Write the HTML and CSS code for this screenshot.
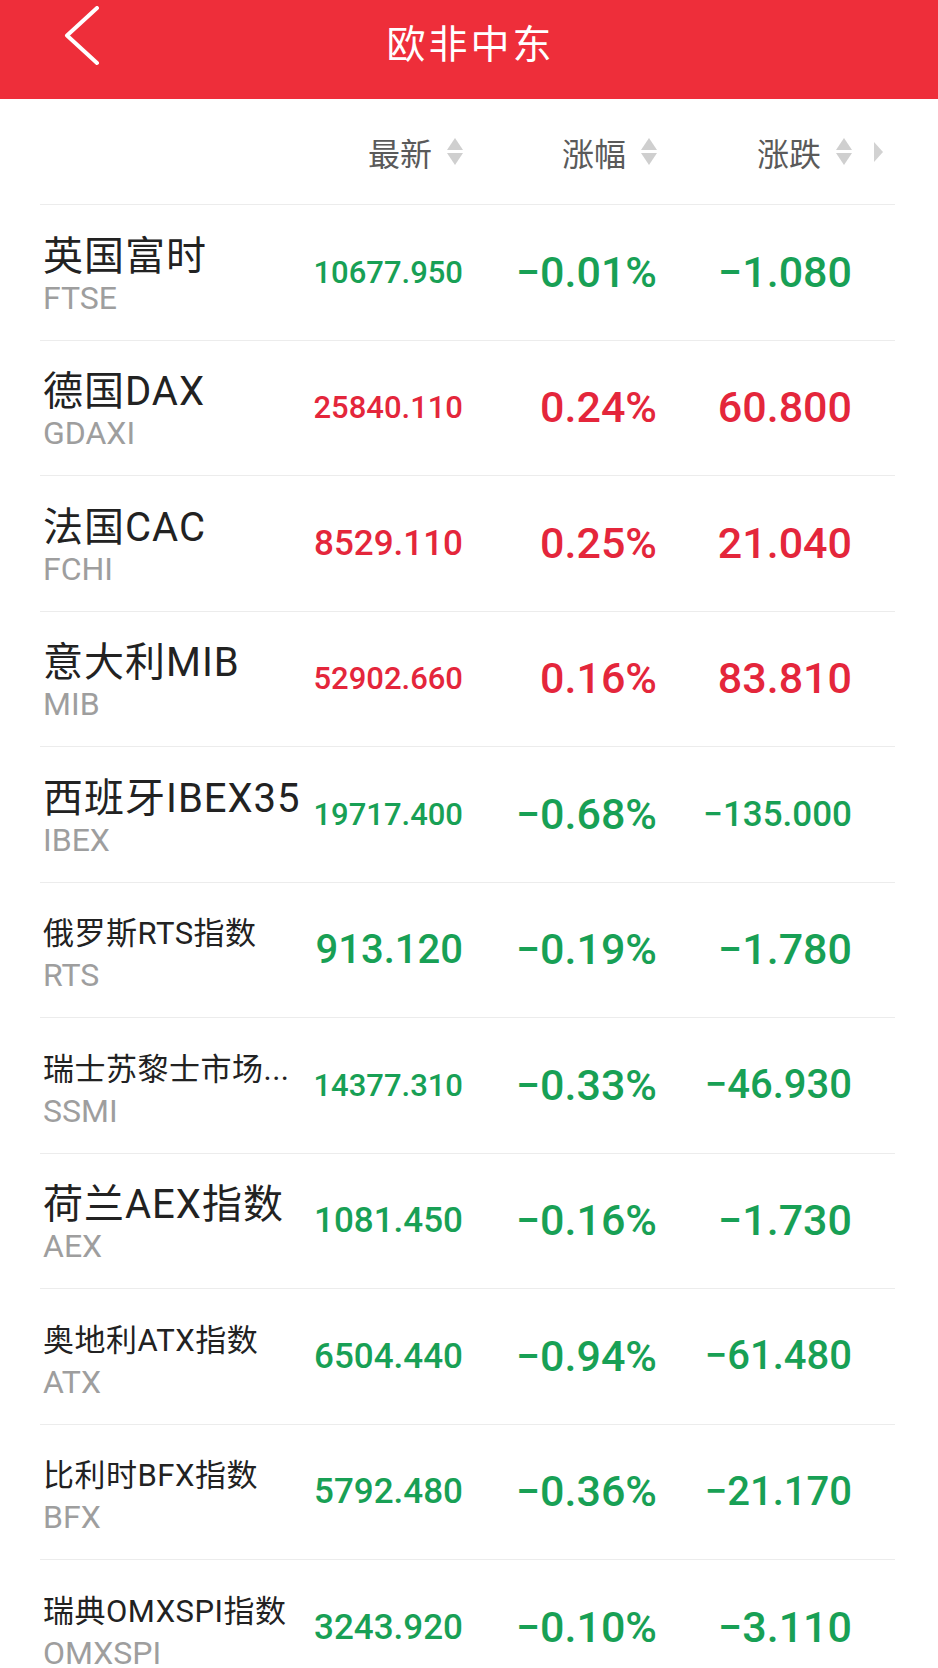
FILE: index.html
```html
<!DOCTYPE html>
<html lang="zh-CN">
<head>
    <meta charset="UTF-8">
    <meta name="viewport" content="width=device-width, initial-scale=1.0">
    <title>欧非中东</title>
    <link rel="stylesheet" href="styles.css">
</head>
<body>
    <!-- Top bar -->
    <header class="topbar">
        <a class="back" href="#">
            <svg width="40" height="60" viewBox="0 0 40 60">
                <polyline points="33,2 3,29.5 33,57" fill="none" stroke="#fff" stroke-width="4" stroke-linecap="round" stroke-linejoin="round"/>
            </svg>
        </a>
        <h1 class="title">欧非中东</h1>
        <span></span>
    </header>

    <!-- Column titles -->
    <div class="quote-head">
        <span></span>
        <span class="sort">最新<i class="sort-arrows"><b></b><b></b></i></span>
        <span class="sort">涨幅<i class="sort-arrows"><b></b><b></b></i></span>
        <span class="sort">涨跌<i class="sort-arrows"><b></b><b></b></i></span>
        <i class="more"></i>
    </div>

    <!-- Index list -->
    <ul class="quote-list">
        <li class="quote-row down">
            <div class="quote-name"><span class="name">英国富时</span><span class="code">FTSE</span></div>
            <span class="num last fit-s">10677.950</span>
            <span class="num pct">−0.01%</span>
            <span class="num chg">−1.080</span>
        </li>
        <li class="quote-row up">
            <div class="quote-name"><span class="name">德国DAX</span><span class="code">GDAXI</span></div>
            <span class="num last fit-s">25840.110</span>
            <span class="num pct">0.24%</span>
            <span class="num chg">60.800</span>
        </li>
        <li class="quote-row up">
            <div class="quote-name"><span class="name">法国CAC</span><span class="code">FCHI</span></div>
            <span class="num last fit-m">8529.110</span>
            <span class="num pct">0.25%</span>
            <span class="num chg">21.040</span>
        </li>
        <li class="quote-row up">
            <div class="quote-name"><span class="name">意大利MIB</span><span class="code">MIB</span></div>
            <span class="num last fit-s">52902.660</span>
            <span class="num pct">0.16%</span>
            <span class="num chg">83.810</span>
        </li>
        <li class="quote-row down">
            <div class="quote-name"><span class="name">西班牙IBEX35</span><span class="code">IBEX</span></div>
            <span class="num last fit-s">19717.400</span>
            <span class="num pct">−0.68%</span>
            <span class="num chg fit-m">−135.000</span>
        </li>
        <li class="quote-row down">
            <div class="quote-name"><span class="name small">俄罗斯RTS指数</span><span class="code">RTS</span></div>
            <span class="num last fit-l">913.120</span>
            <span class="num pct">−0.19%</span>
            <span class="num chg">−1.780</span>
        </li>
        <li class="quote-row down">
            <div class="quote-name"><span class="name small">瑞士苏黎士市场...</span><span class="code">SSMI</span></div>
            <span class="num last fit-s">14377.310</span>
            <span class="num pct">−0.33%</span>
            <span class="num chg fit-l">−46.930</span>
        </li>
        <li class="quote-row down">
            <div class="quote-name"><span class="name">荷兰AEX指数</span><span class="code">AEX</span></div>
            <span class="num last fit-m">1081.450</span>
            <span class="num pct">−0.16%</span>
            <span class="num chg">−1.730</span>
        </li>
        <li class="quote-row down">
            <div class="quote-name"><span class="name small">奥地利ATX指数</span><span class="code">ATX</span></div>
            <span class="num last fit-m">6504.440</span>
            <span class="num pct">−0.94%</span>
            <span class="num chg fit-l">−61.480</span>
        </li>
        <li class="quote-row down">
            <div class="quote-name"><span class="name small">比利时BFX指数</span><span class="code">BFX</span></div>
            <span class="num last fit-m">5792.480</span>
            <span class="num pct">−0.36%</span>
            <span class="num chg fit-l">−21.170</span>
        </li>
        <li class="quote-row down">
            <div class="quote-name"><span class="name small">瑞典OMXSPI指数</span><span class="code">OMXSPI</span></div>
            <span class="num last fit-m">3243.920</span>
            <span class="num pct">−0.10%</span>
            <span class="num chg">−3.110</span>
        </li>
    </ul>
</body>
</html>
```

FILE: styles.css
```css
body {
    margin: 0;
    background: #fff;
    font-family: Roboto, "Noto Sans CJK SC", sans-serif;
}

/* Top bar */
.topbar {
    height: 99px;
    background: #ee2e3a;
    display: grid;
    grid-template-columns: 1fr auto 1fr;
    align-items: start;
}
.back {
    display: block;
    width: 40px;
    height: 60px;
    margin: 6px 0 0 64px;
}
.back svg {
    display: block;
}
.title {
    margin: 0;
    padding-left: 3px;
    font-family: "Noto Sans CJK SC", sans-serif;
    font-size: 39px;
    font-weight: 400;
    letter-spacing: 3px;
    line-height: 83px;
    color: #fff;
}

/* Shared grid for header and rows */
.quote-head,
.quote-row {
    display: grid;
    grid-template-columns: 253px 170px 194px 195px 43px;
    align-items: center;
}

/* Column titles */
.quote-head {
    height: 105px;
    margin: 0 43px 0 40px;
}
.sort {
    justify-self: end;
    display: flex;
    align-items: center;
    gap: 15px;
    font-family: "Noto Sans CJK SC", sans-serif;
    font-size: 32px;
    line-height: 1;
    color: #5a5a5a;
}
.sort-arrows {
    display: flex;
    flex-direction: column;
    gap: 3px;
}
.sort-arrows b {
    width: 0;
    height: 0;
    border-left: 8.5px solid transparent;
    border-right: 8.5px solid transparent;
}
.sort-arrows b:first-child {
    border-bottom: 12px solid #cfcfcf;
}
.sort-arrows b:last-child {
    border-top: 12px solid #cfcfcf;
}
.more {
    justify-self: start;
    margin-left: 22px;
    width: 0;
    height: 0;
    border-top: 10px solid transparent;
    border-bottom: 10px solid transparent;
    border-left: 9px solid #d2d2d2;
}

/* Rows */
.quote-list {
    list-style: none;
    margin: 0 43px 0 40px;
    padding: 0;
}
.quote-row {
    height: 135.5px;
    box-sizing: border-box;
    border-top: 1px solid #ececec;
}
.quote-name {
    display: flex;
    flex-direction: column;
    padding-left: 3px;
    white-space: nowrap;
}
.name {
    padding-top: 3px;
    font-size: 40px;
    line-height: 49px;
    letter-spacing: 1px;
    color: #222;
}
.name.small {
    font-size: 31px;
    letter-spacing: 0.5px;
}
.code {
    font-size: 32px;
    line-height: 35px;
    color: #9e9e9e;
}

/* Numbers */
.num {
    justify-self: end;
    font-family: Roboto, sans-serif;
    font-weight: 500;
    font-size: 43px;
    line-height: 1;
    white-space: nowrap;
}
.num.fit-s { font-size: 31px; }
.num.fit-m { font-size: 35px; }
.num.fit-l { font-size: 40px; }

.down .num { color: #18a055; }
.up .num { color: #e4263b; }
```
